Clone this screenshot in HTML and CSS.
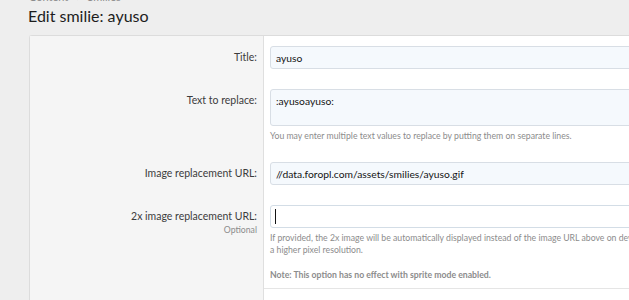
FILE: index.html
```html
<!DOCTYPE html>
<html lang="en">
<head>
    <meta charset="UTF-8">
    <title>Edit smilie: ayuso</title>
    <link rel="stylesheet" href="styles.css">
</head>
<body>
    <div class="page">
        <ul class="crumbs">
            <li>Content</li>
            <li class="sep">›</li>
            <li>Smilies</li>
        </ul>
        <h1 class="page-title">Edit smilie: ayuso</h1>

        <form class="block">
            <div class="form-row">
                <div class="row-label"><label for="title">Title:</label></div>
                <div class="row-input">
                    <input id="title" class="input" type="text" value="ayuso">
                </div>
            </div>

            <div class="form-row">
                <div class="row-label"><label for="replace">Text to replace:</label></div>
                <div class="row-input">
                    <textarea id="replace" class="input textarea">:ayusoayuso:</textarea>
                    <div class="explain">You may enter multiple text values to replace by putting them on separate lines.</div>
                </div>
            </div>

            <div class="form-row">
                <div class="row-label"><label for="image">Image replacement URL:</label></div>
                <div class="row-input">
                    <input id="image" class="input" type="text" value="//data.foropl.com/assets/smilies/ayuso.gif">
                </div>
            </div>

            <div class="form-row tight">
                <div class="row-label">
                    <label for="image2x">2x image replacement URL:</label>
                    <div class="hint">Optional</div>
                </div>
                <div class="row-input">
                    <div class="focus-wrap">
                        <input id="image2x" class="input is-focused" type="text" value="">
                    </div>
                    <div class="explain">If provided, the 2x image will be automatically displayed instead of the image URL above on devices capable of displaying<br>a higher pixel resolution.</div>
                    <div class="explain note">Note: This option has no effect with sprite mode enabled.</div>
                </div>
            </div>

            <div class="form-row last">
                <div class="row-label"></div>
                <div class="row-input"></div>
            </div>
        </form>
    </div>
</body>
</html>
```

FILE: styles.css
```css
body {
    margin: 0;
    background-color: #eeeeee;
    font-family: Lato, 'Open Sans', sans-serif;
    color: #141414;
    overflow: hidden;
    height: 300px;
}

.page {
    width: 760px;
    padding-left: 29px;
}

.crumbs {
    list-style: none;
    margin: -10px 0 0 0;
    padding: 0;
    display: flex;
    gap: 8px;
    font-size: 11px;
    line-height: 14px;
    color: #8c8c8c;
}

.page-title {
    margin: 0 0 7px -1px;
    font-size: 16px;
    font-weight: 400;
    line-height: 24px;
    color: #1d1d1d;
}

.block {
    border: 1px solid #dcdcdc;
    border-right: none;
    background-color: #fff;
    border-radius: 3px 0 0 0;
}

.form-row {
    display: flex;
}

.row-label {
    width: 227px;
    flex-shrink: 0;
    background-color: #f5f5f5;
    border-right: 1px solid #dfdfdf;
    padding: 10px 6px 10px 0;
    text-align: right;
    font-size: 10.5px;
    color: #3c3c3c;
}

.row-label label {
    display: block;
    line-height: 23px;
}

.hint {
    font-size: 8.7px;
    line-height: 4px;
    color: #8c8c8c;
}

.row-input {
    flex: 1;
    padding: 10px 0 10px 6px;
}

.input {
    display: block;
    box-sizing: border-box;
    width: 100%;
    height: 23px;
    margin: 0;
    padding: 0 5px;
    border: 1px solid #d8dee5;
    border-radius: 3px;
    background-color: #f5f9fd;
    font-family: inherit;
    font-size: 10.3px;
    color: #141414;
    outline: none;
}

.textarea {
    height: 37px;
    padding-top: 4px;
    resize: none;
    line-height: 14px;
}

.is-focused {
    background-color: #fff;
    border-color: #d3dde6;
}

.focus-wrap {
    position: relative;
}

.focus-wrap::after {
    content: "";
    position: absolute;
    left: 5px;
    top: 4px;
    width: 1px;
    height: 15px;
    background-color: #141414;
}

.explain {
    margin-top: 4px;
    font-size: 8.7px;
    line-height: 12px;
    color: #8c8c8c;
    white-space: nowrap;
}

.note {
    margin-top: 13px;
    font-weight: 700;
}

.form-row.tight .row-input {
    padding-bottom: 7px;
}

.form-row.last .row-input {
    border-top: 1px solid #e5e5e5;
    height: 20px;
}
```
